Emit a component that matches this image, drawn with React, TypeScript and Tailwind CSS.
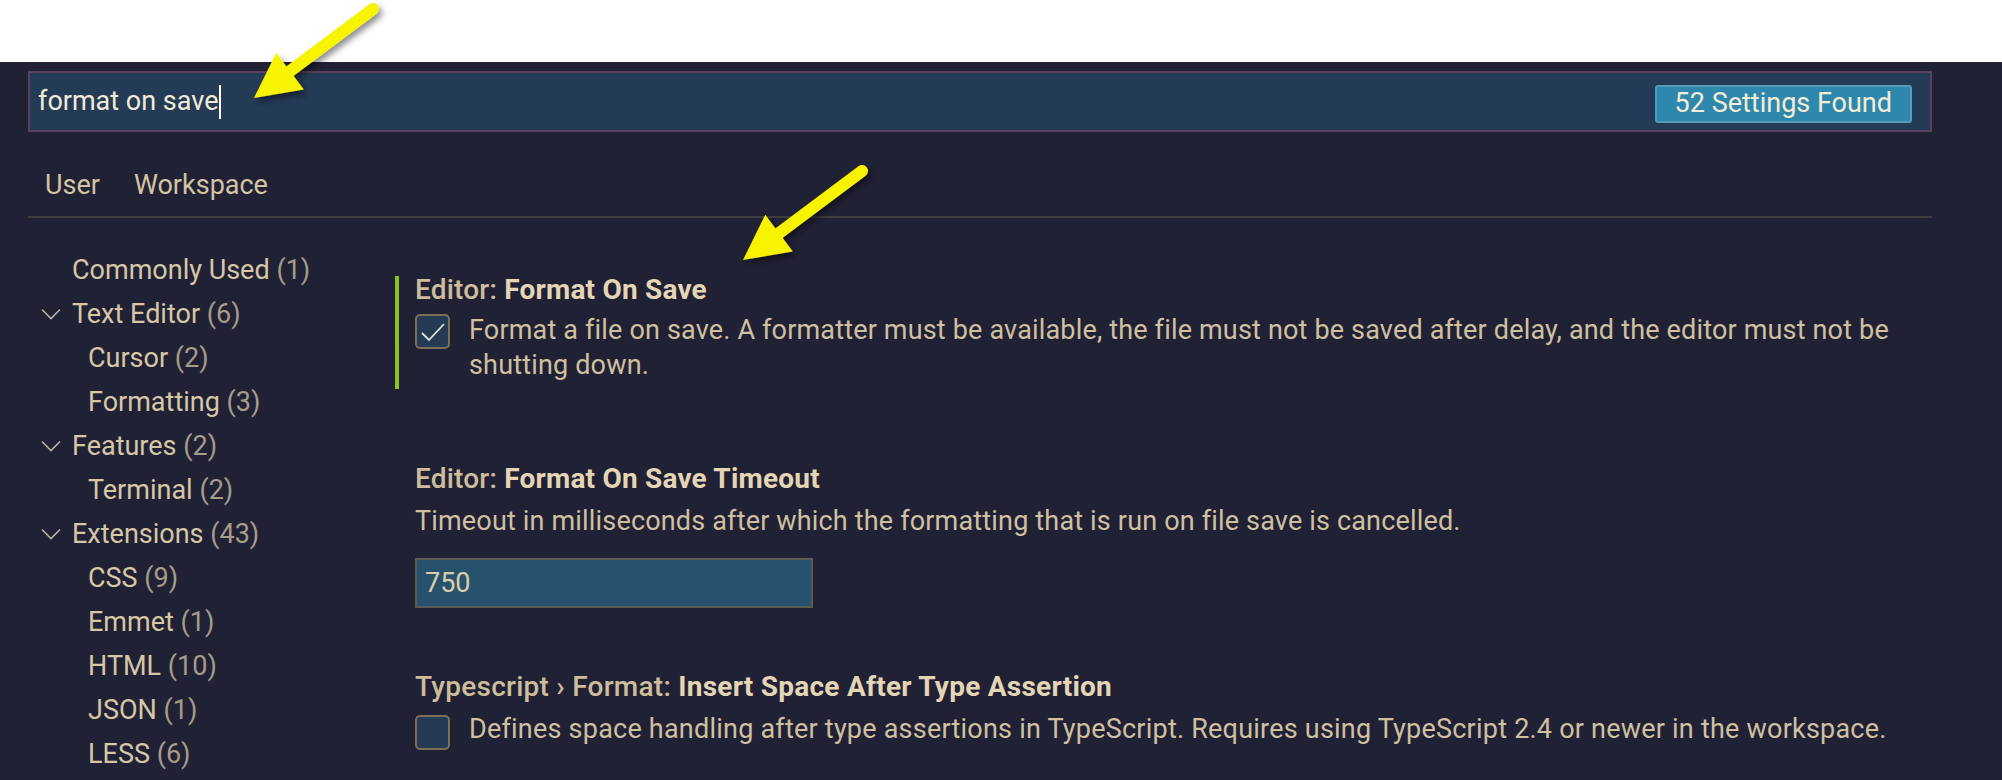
import React from "react";

const tree = [
  { label: "Commonly Used", count: 1, level: 0, chevron: false },
  { label: "Text Editor", count: 6, level: 0, chevron: true },
  { label: "Cursor", count: 2, level: 1, chevron: false },
  { label: "Formatting", count: 3, level: 1, chevron: false },
  { label: "Features", count: 2, level: 0, chevron: true },
  { label: "Terminal", count: 2, level: 1, chevron: false },
  { label: "Extensions", count: 43, level: 0, chevron: true },
  { label: "CSS", count: 9, level: 1, chevron: false },
  { label: "Emmet", count: 1, level: 1, chevron: false },
  { label: "HTML", count: 10, level: 1, chevron: false },
  { label: "JSON", count: 1, level: 1, chevron: false },
  { label: "LESS", count: 6, level: 1, chevron: false },
];

const Chevron = () => (
  <svg width="20" height="12" viewBox="0 0 20 12" className="shrink-0">
    <path d="M1 1.5 L10 10.5 L19 1.5" fill="none" stroke="#b9b2a4" strokeWidth="1.6" />
  </svg>
);

const Checkbox = ({ checked }: { checked?: boolean }) => (
  <div className="w-[35px] h-[35px] shrink-0 rounded-[5px] border-2 border-[#7d6f52] bg-[#243a55] flex items-center justify-center">
    {checked && (
      <svg width="26" height="22" viewBox="0 0 26 22">
        <path d="M2 12 L9 19 L24 3" fill="none" stroke="#e6e2da" strokeWidth="1.8" />
      </svg>
    )}
  </div>
);

const Arrow = ({ t, p }: { t: [number, number]; p: [number, number] }) => {
  const dx = p[0] - t[0];
  const dy = p[1] - t[1];
  const len = Math.hypot(dx, dy);
  const ux = dx / len;
  const uy = dy / len;
  const bx = p[0] - ux * 45;
  const by = p[1] - uy * 45;
  const nx = -uy;
  const ny = ux;
  const c1 = `${bx + nx * 23},${by + ny * 23}`;
  const c2 = `${bx - nx * 23},${by - ny * 23}`;
  return (
    <g filter="url(#shadow)">
      <line x1={t[0]} y1={t[1]} x2={bx + ux * 4} y2={by + uy * 4} stroke="#f8f400" strokeWidth="12" strokeLinecap="round" />
      <polygon points={`${p[0]},${p[1]} ${c1} ${c2}`} fill="#f8f400" />
    </g>
  );
};

const App = () => {
  return (
    <div className="relative w-[2002px] h-[780px] overflow-hidden bg-[#212136] font-['Roboto',sans-serif] text-[#d6c7a6]">
      <div className="h-[62px] bg-white" />
      <div className="pl-[28px] pr-[70px]">
        <div className="mt-[9px] h-[61px] border-2 border-[#5c4160] bg-[#243b55] flex items-center pl-[8px] pr-[18px]">
          <div className="flex-1 flex items-center text-[27px] text-[#f2ead8]">
            <span>format on save</span>
            <span className="w-[2px] h-[34px] bg-white ml-[1px]" />
          </div>
          <div className="mt-[4px] h-[38px] px-[18px] rounded-[3px] border-2 border-[#559cbb] bg-[#2e88ad] flex items-center text-[27px] text-[#f4ecd4]">
            52 Settings Found
          </div>
        </div>

        <div className="h-[86px] pt-[22px] flex items-center gap-[34px] pl-[17px] border-b-2 border-[#3e3c3c] text-[27px] text-[#d3c4a2]">
          <span>User</span>
          <span>Workspace</span>
        </div>

        <div className="flex">
          <div className="w-[367px] shrink-0 pt-[30px]">
            {tree.map((item) => (
              <div key={item.label} className="h-[44px] flex items-center text-[27px]">
                <div className="w-[44px] shrink-0 pl-[13px] flex items-center">
                  {item.chevron && <Chevron />}
                </div>
                <span className={item.level === 1 ? "pl-[16px]" : ""}>
                  {item.label} <span className="text-[#a59c8a]">({item.count})</span>
                </span>
              </div>
            ))}
          </div>

          <div className="flex-1 pt-[58px]">
            <div className="border-l-4 border-[#8cc21f] pl-[16px] pb-[6px]">
              <div className="h-[28px] leading-[28px] text-[28px] tracking-[0.2px]">
                <span className="font-medium text-[#cdbd9b]">Editor: </span>
                <span className="font-bold text-[#e4d5b4]">Format On Save</span>
              </div>
              <div className="mt-[9px] flex gap-[19px]">
                <div className="pt-[1px]">
                  <Checkbox checked />
                </div>
                <div className="text-[27px] leading-[35px] tracking-[0.17px] text-[#cfc0a0]">
                  Format a file on save. A formatter must be available, the file must not be saved after delay, and the editor must not be
                  <br />
                  shutting down.
                </div>
              </div>
            </div>

            <div className="mt-[76px] border-l-4 border-transparent pl-[16px]">
              <div className="h-[28px] leading-[28px] text-[28px] tracking-[0.2px]">
                <span className="font-medium text-[#cdbd9b]">Editor: </span>
                <span className="font-bold text-[#e4d5b4]">Format On Save Timeout</span>
              </div>
              <div className="mt-[11px] text-[27px] leading-[35px] tracking-[0.17px] text-[#cfc0a0]">
                Timeout in milliseconds after which the formatting that is run on file save is cancelled.
              </div>
              <div className="mt-[19px] w-[398px] h-[50px] border-2 border-[#5b5b52] bg-[#27526d] flex items-center pl-[8px] text-[27px] text-[#dccdaa]">
                750
              </div>
            </div>

            <div className="mt-[65px] border-l-4 border-transparent pl-[16px]">
              <div className="h-[28px] leading-[28px] text-[28px] tracking-[0.25px]">
                <span className="font-medium text-[#cdbd9b]">Typescript › Format: </span>
                <span className="font-bold text-[#e4d5b4]">Insert Space After Type Assertion</span>
              </div>
              <div className="mt-[11px] flex gap-[19px]">
                <div className="pt-[3px]">
                  <Checkbox />
                </div>
                <div className="text-[27px] leading-[35px] tracking-[0.22px] text-[#cfc0a0]">
                  Defines space handling after type assertions in TypeScript. Requires using TypeScript 2.4 or newer in the workspace.
                </div>
              </div>
            </div>
          </div>
        </div>
      </div>

      <svg className="absolute inset-0 pointer-events-none" width="2002" height="780">
        <defs>
          <filter id="shadow" x="-20%" y="-20%" width="140%" height="140%">
            <feDropShadow dx="3" dy="4" stdDeviation="3" floodColor="#000" floodOpacity="0.45" />
          </filter>
        </defs>
        <Arrow t={[373, 9]} p={[254, 98]} />
        <Arrow t={[862, 171]} p={[743, 260]} />
      </svg>
    </div>
  );
};

export default App;
